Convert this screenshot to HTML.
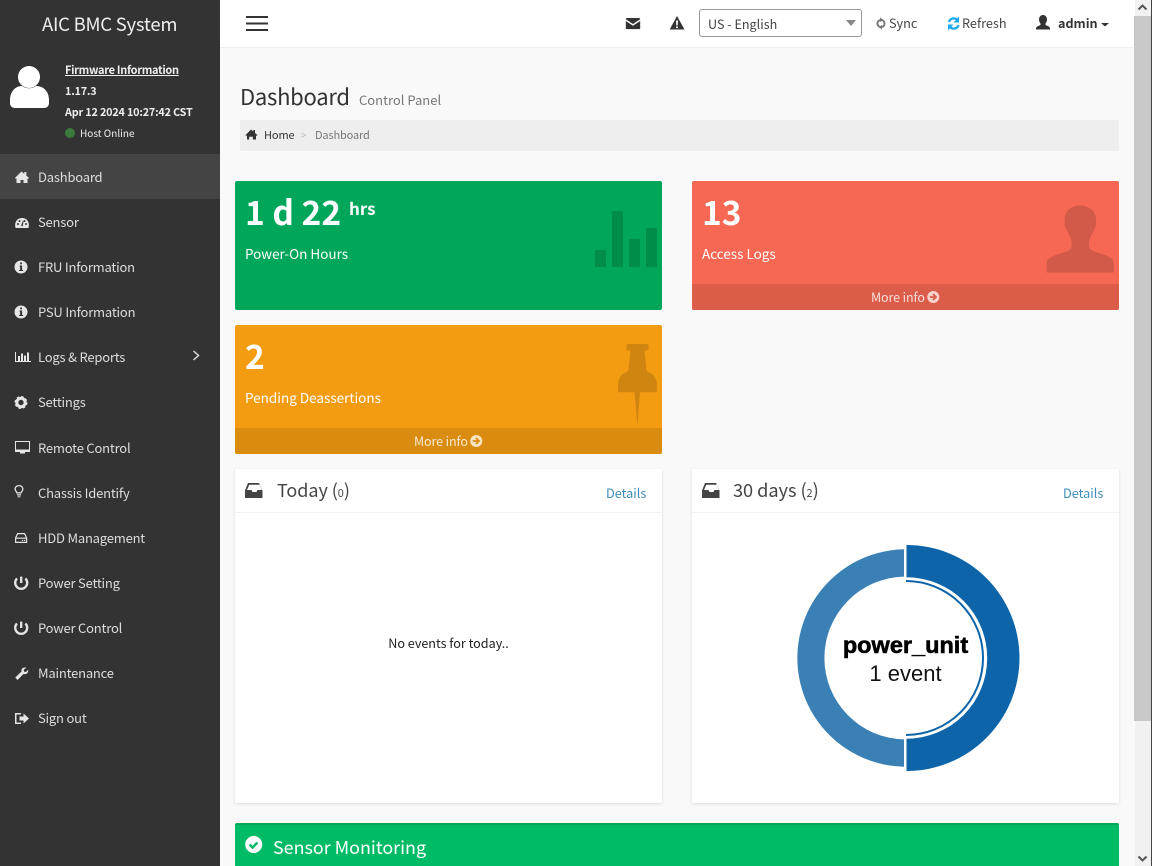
<!DOCTYPE html>
<html><head><meta charset="utf-8"><title>AIC BMC System</title>
<style>
html,body{margin:0;padding:0;width:1152px;height:866px;overflow:hidden;background:#f9f9f9}
body{position:relative;font-family:"Noto Sans CJK JP","Liberation Sans",sans-serif;color:#333}
.a,.t{position:absolute}
.t{white-space:nowrap;line-height:20px;height:20px}
svg{position:absolute;overflow:visible}
.nav{color:#ddd;font-size:13px;letter-spacing:-.2px;left:38px}
.w{color:#fff}
.card{position:absolute;border-radius:2px}
.panel{position:absolute;background:#fff;box-shadow:0 1px 3px rgba(0,0,0,.12)}
.more{color:rgba(255,255,255,.8);font-size:12.5px;letter-spacing:-.1px}
</style></head><body>

<div class="a" style="left:0;top:0;width:220px;height:866px;background:#333"></div>
<div class="a" style="left:0;top:154px;width:220px;height:45px;background:#444"></div>
<div class="t" style="left:42px;top:14px;font-size:18.5px;letter-spacing:-.25px;color:#eee">AIC BMC System</div>
<svg style="left:0;top:0" width="60" height="120"><circle cx="29" cy="77" r="11" fill="#fff"/><path d="M10 100c0-9 6-14 12-14 4 3 10 3 14 0 7 0 13 5 13 14v3c0 3-2 5-5 5H15c-3 0-5-2-5-5z" fill="#fff"/></svg>
<div class="t" style="left:65px;top:60px;font-size:11px;letter-spacing:-.3px;color:#eee;font-weight:700;text-decoration:underline">Firmware Information</div>
<div class="t" style="left:65px;top:81px;font-size:10.8px;letter-spacing:-.18px;color:#eee;font-weight:700">1.17.3</div>
<div class="t" style="left:65px;top:102px;font-size:10.8px;letter-spacing:-.18px;color:#eee;font-weight:700">Apr 12 2024 10:27:42 CST</div>
<div class="a" style="left:65px;top:128px;width:10px;height:10px;border-radius:50%;background:#3c7a3c"></div>
<div class="t" style="left:80px;top:123px;font-size:10px;color:#eee">Host Online</div>

<svg style="left:0;top:0" width="220" height="740" fill="#e6e6e6">
<path d="M21.500 171.500l2.800 2.400V172h2v3.600l2.700 2.300-.8 1-.7-.6v4.700h-4v-3h-3v3h-4v-4.700l-.7.6-.8-1z"/>
<path d="M15.600 228c-1.600-5 1-10 6.400-10s8 5 6.400 10z"/>
<g fill="#333"><circle cx="18" cy="224" r="1"/><circle cx="19.500" cy="221" r="1"/><circle cx="24.500" cy="221" r="1"/><circle cx="26" cy="224" r="1"/><path d="M21 226l1.800-5 .8.300-1 5z"/></g>
<circle cx="21" cy="267" r="6.500"/><circle cx="21" cy="312" r="6.500"/>
<path d="M15 352h1v9h15v1H15zM18 356h2v5h-2zM21 353.500h2v7.500h-2zM24 355.500h2v5.500h-2zM27 352.500h2v8.500h-2z"/>
<circle cx="21" cy="402.500" r="4.200" fill="none" stroke="#e6e6e6" stroke-width="3"/>
<circle cx="21" cy="402.500" r="5.700" fill="none" stroke="#e6e6e6" stroke-width="1.600" stroke-dasharray="2.400 2.080"/>
<path d="M15 441h15v11h-5v1.500h-5V452h-5zM16 442v8.500h13V442z" fill-rule="evenodd"/><rect x="15" y="449.500" width="15" height="2.500"/>
<path d="M19 485c2.500 0 4.500 1.800 4.500 4 0 1.800-1.500 2.800-1.800 4.500h-5.400c-.3-1.700-1.800-2.700-1.800-4.500 0-2.200 2-4 4.500-4zm0 1.300c-1.800 0-3.200 1.200-3.200 2.700 0 1.300 1.200 2.200 1.600 3.300h3.200c.4-1.100 1.600-2 1.600-3.300 0-1.500-1.400-2.700-3.200-2.700zM17 494.300h4v1.200h-4zM17.600 496.200h2.800v1h-2.800z" fill-rule="evenodd"/>
<path d="M17.600 533.600h7l2 4.400v4.400h-11V538zM15.600 538.200h10.800" fill="none" stroke="#e6e6e6" stroke-width="1.200"/><rect x="22" y="539.800" width="1.100" height="1.200"/><rect x="24" y="539.800" width="1.100" height="1.200"/>
<g fill="none" stroke="#e6e6e6" stroke-width="2.300"><path d="M17 578.500a6 6 0 1 0 8.400 0M21.200 576.600v6.400"/><path d="M17 623.500a6 6 0 1 0 8.400 0M21.200 621.600v6.400"/></g>
<path d="M15.300 677.500l6.200-6c-.5-2.300 1-4 3.500-4h1.500l-2.700 2.300.3 1.800 1.800.4 2.300-2.300c.4 2.900-1.500 5-4.700 4.300l-6 6z"/>
<path d="M15 713h6v1.500h-4.500v8H21v1.500h-6zM19.500 716.500h4v-3l5.500 5-5.500 5v-3h-4z"/>
</svg>
<svg style="left:0;top:0" width="220" height="300"><g fill="#333"><rect x="20.200" y="262.500" width="1.800" height="1.800"/><path d="M19.500 265.500h2.600v4.500h1v1h-4v-1h1v-3.500h-.6z"/><rect x="20.200" y="307.500" width="1.800" height="1.800"/><path d="M19.500 310.500h2.600v4.500h1v1h-4v-1h1v-3.500h-.6z"/></g><path d="M193.500 351l5 4.500-5 4.500" fill="none" stroke="#ddd" stroke-width="1.500"/></svg>
<div class="t nav" style="top:167px">Dashboard</div>
<div class="t nav" style="top:212px">Sensor</div>
<div class="t nav" style="top:257px">FRU Information</div>
<div class="t nav" style="top:302px">PSU Information</div>
<div class="t nav" style="top:347px">Logs &amp; Reports</div>
<div class="t nav" style="top:392px">Settings</div>
<div class="t nav" style="top:438px">Remote Control</div>
<div class="t nav" style="top:483px">Chassis Identify</div>
<div class="t nav" style="top:528px">HDD Management</div>
<div class="t nav" style="top:573px">Power Setting</div>
<div class="t nav" style="top:618px">Power Control</div>
<div class="t nav" style="top:663px">Maintenance</div>
<div class="t nav" style="top:708px">Sign out</div>

<div class="a" style="left:220px;top:0;width:915px;height:47px;background:#fff;border-bottom:1px solid #eee"></div>
<svg style="left:0;top:0" width="1135" height="48">
<g fill="#333"><rect x="246" y="16" width="22" height="2"/><rect x="246" y="22.500" width="22" height="2"/><rect x="246" y="29" width="22" height="2"/>
<path d="M627 18h12c.6 0 1.200.5 1.200 1.200L633 24 625.800 19.200c0-.7.500-1.200 1.200-1.200zM625.800 21l7.200 4.700 7.200-4.700v7.200c0 .5-.5.900-1.200.9h-12c-.7 0-1.200-.4-1.200-.9z"/>
<path d="M677 16l7.500 13.500h-14.800zm-1 4.500l.3 5h1.400l.3-5zm0 6v1.600h2v-1.600z" fill-rule="evenodd"/>
<path d="M1043 15c2.500 0 4 2 4 4.500 0 1.800-.7 3-1.500 4v1.500c2 1 4.500 1.400 4.500 3.500v1h-14v-1c0-2.100 2.500-2.500 4.500-3.500v-1.500c-.8-1-1.500-2.200-1.500-4 0-2.500 1.500-4.500 4-4.500z"/>
<path d="M1101 23h8l-4 3.500z"/></g>
<circle cx="881" cy="23.500" r="3.600" fill="none" stroke="#777" stroke-width="1.900"/><path d="M880 17.500l3.500 2.500-3.500 2zM882 29.500l-3.500-2.500 3.500-2z" fill="#777"/>
<path d="M949 22a5 5 0 0 1 8.500-2M958.500 25a5 5 0 0 1-8.500 2" fill="none" stroke="#1ca8ea" stroke-width="2.300"/><path d="M959 16.500v6h-5.500zM948 30.500v-6h5.500z" fill="#1ca8ea"/>
</svg>
<div class="a" style="left:699px;top:9px;width:161px;height:26px;background:#fff;border:1px solid #999;border-radius:3px"></div>
<svg style="left:846px;top:20px" width="12" height="8"><path d="M0 0h10L5 6z" fill="#888"/></svg>
<div class="t" style="left:708px;top:14px;font-size:12.6px;color:#444">US - English</div>
<div class="t" style="left:889px;top:13px;font-size:12.7px;color:#444">Sync</div>
<div class="t" style="left:962px;top:13px;font-size:12.7px;color:#444">Refresh</div>
<div class="t" style="left:1058px;top:13px;font-size:12.6px;color:#333;font-weight:700">admin</div>

<div class="t" style="left:240px;top:81px;height:30px;line-height:30px;font-size:22px;letter-spacing:-.25px;color:#333">Dashboard</div>
<div class="t" style="left:359px;top:90px;font-size:13px;color:#777">Control Panel</div>
<div class="a" style="left:240px;top:120px;width:879px;height:31px;background:#eee;border-radius:2px"></div>
<svg style="left:0;top:0" width="260" height="145"><path d="M251 129.500l2.300 2V130h1.700v3l2.500 2.100-.7.900-.8-.7v4.200h-3.200v-2.700h-3.600v2.700H247v-4.200l-.8.700-.7-.9z" fill="#333"/></svg>
<div class="t" style="left:264px;top:125px;font-size:11px;letter-spacing:-.1px;color:#333">Home</div>
<div class="t" style="left:301px;top:125px;font-size:10px;color:#bbb">&gt;</div>
<div class="t" style="left:315px;top:125px;font-size:11px;letter-spacing:-.15px;color:#777">Dashboard</div>

<div class="card" style="left:235px;top:181px;width:427px;height:129px;background:#00a65a"></div>
<svg style="left:0;top:0" width="700" height="300"><g fill="#008d4c"><rect x="595" y="250" width="11" height="17"/><rect x="612" y="211" width="11" height="56"/><rect x="629" y="239" width="11" height="28"/><rect x="646" y="228" width="11" height="39"/></g></svg>
<div class="t w" style="left:245px;top:191px;height:40px;line-height:40px;font-size:33.5px;font-weight:700">1 d 22</div>
<div class="t w" style="left:349px;top:198px;font-size:17px;font-weight:700">hrs</div>
<div class="t w" style="left:245px;top:243px;font-size:13.5px">Power-On Hours</div>

<div class="card" style="left:692px;top:181px;width:427px;height:129px;background:#f66854;overflow:hidden"><div class="a" style="left:0;top:103px;width:427px;height:26px;background:#dc5c4a"></div></div>
<svg style="left:0;top:0" width="1135" height="300"><path d="M1080 205.500c9 0 16 6 16 14 0 3 .5 5-.5 7-1 3-2 5-3.500 7.500-1.500 3-3 6-3 9 0 5 1 6.500 4 8 5 2 21 5.500 21 11.500v10h-67.300v-10c0-6 16-9.500 21-11.500 3-1.500 4-3 4-8 0-3-1.500-6-3-9-1.500-2.500-2.500-4.500-3.500-7.500-1-2-.5-4-.5-7 0-8 6-14 15.300-14z" fill="#d25a49"/></svg>
<div class="t w" style="left:702px;top:191px;height:40px;line-height:40px;font-size:33.5px;font-weight:700">13</div>
<div class="t w" style="left:702px;top:243px;font-size:13.5px">Access Logs</div>
<div class="t more" style="left:871px;top:287px">More info</div>
<svg style="left:927px;top:291px" width="13" height="13"><circle cx="6.300" cy="6" r="6" fill="#f8d2cc"/><path d="M2.800 6h6M6 3l3 3-3 3" fill="none" stroke="#dc5c4a" stroke-width="1.800"/></svg>

<div class="card" style="left:235px;top:325px;width:427px;height:129px;background:#f39c12;overflow:hidden"><div class="a" style="left:0;top:103px;width:427px;height:26px;background:#da8c10"></div></div>
<svg style="left:0;top:0" width="700" height="440"><path d="M627 344h20c1 0 1.500 .7 1.500 1.500v3.500c0 1-.7 1.500-1.500 1.500h-2.500l2 19c.2 1.500 1 2 3 3.200 4 2 7.500 5 7.500 13v5c0 1-.5 1.500-1.500 1.500H640l-2.300 31-.5 0-2.700-31h-15c-1 0-1.500-.5-1.500-1.500v-5c0-8 3.500-11 7.500-13 2-1.200 2.800-1.700 3-3.200l2-19h-2.500c-.8 0-1.500-.5-1.500-1.500v-3.500c0-.8 .5-1.500 1.500-1.500z" fill="#d08510"/></svg>
<div class="t w" style="left:245px;top:335px;height:40px;line-height:40px;font-size:33.5px;font-weight:700">2</div>
<div class="t w" style="left:245px;top:387px;font-size:13.5px">Pending Deassertions</div>
<div class="t more" style="left:414px;top:431px">More info</div>
<svg style="left:470px;top:435px" width="13" height="13"><circle cx="6.300" cy="6" r="6" fill="#fae3c0"/><path d="M2.800 6h6M6 3l3 3-3 3" fill="none" stroke="#da8c10" stroke-width="1.800"/></svg>

<div class="panel" style="left:235px;top:469px;width:427px;height:334px"><div class="a" style="left:0;top:43px;width:427px;height:1px;background:#f2f2f2"></div></div>
<div class="panel" style="left:692px;top:469px;width:427px;height:334px"><div class="a" style="left:0;top:43px;width:427px;height:1px;background:#f2f2f2"></div></div>
<svg style="left:0;top:0" width="760" height="520"><g fill="#444"><path d="M248 483h11l3.500 7.500v7.500h-17.500v-7.500zM249.300 484.800l-2.300 5.200h4.500l1 2h4l1-2h4.500l-2.300-5.200z" fill-rule="evenodd"/><path d="M705 483h11l3.500 7.500v7.500h-17.500v-7.500zM706.300 484.800l-2.300 5.200h4.500l1 2h4l1-2h4.500l-2.300-5.200z" fill-rule="evenodd"/></g></svg>
<div class="t" style="left:277px;top:478px;height:24px;line-height:24px;font-size:18px;letter-spacing:-.05px;color:#444">Today (<span style="font-size:11px">0</span>)</div>
<div class="t" style="left:606px;top:483px;font-size:12.7px;color:#3c8dbc">Details</div>
<div class="t" style="left:733px;top:478px;height:24px;line-height:24px;font-size:18.2px;letter-spacing:-.05px;color:#444">30 days (<span style="font-size:11px">2</span>)</div>
<div class="t" style="left:1063px;top:483px;font-size:12.7px;color:#3c8dbc">Details</div>
<div class="t" style="left:235px;top:633px;width:427px;text-align:center;font-size:12.6px;color:#222">No events for today..</div>

<svg style="left:0;top:0" width="1135" height="800">
<path d="M904 549.300A108.720 108.720 0 0 0 904 766.700V739.400A81.420 81.420 0 0 1 904 576.600Z" fill="#3a80b5"/>
<path d="M906.500 545A113 113 0 0 1 906.500 771V738.700A80.700 80.700 0 0 0 906.500 577.300Z" fill="#0d64a8"/>
<path d="M906 581A77 77 0 0 1 906 735" fill="none" stroke="#0d64a8" stroke-width="2"/>
<text x="905.500" y="653" text-anchor="middle" font-family="'Liberation Sans',sans-serif" font-weight="700" font-size="23.500" fill="#000" stroke="#000" stroke-width=".6">power_unit</text>
<text x="905.500" y="681" text-anchor="middle" font-family="'Liberation Sans',sans-serif" font-size="22" fill="#111">1 event</text>
</svg>

<div class="a" style="left:235px;top:823px;width:884px;height:43px;background:#00bb66;border-top:2px solid #00a65a;box-sizing:border-box;border-radius:2px 2px 0 0"></div>
<svg style="left:245px;top:836px" width="18" height="18"><circle cx="8.700" cy="8.500" r="8.500" fill="#fff"/><path d="M4.500 8.500l3 3 5-5" fill="none" stroke="#00bb66" stroke-width="2.400"/></svg>
<div class="t w" style="left:273px;top:834px;height:26px;line-height:26px;font-size:17.9px">Sensor Monitoring</div>

<div class="a" style="left:1135px;top:0;width:17px;height:866px;background:#f1f1f1"></div>
<div class="a" style="left:1134px;top:16px;width:17px;height:705px;background:#c8c8c8"></div>
<div class="a" style="left:1151px;top:0;width:1px;height:866px;background:#444"></div>
<svg style="left:1134px;top:0" width="17" height="866"><path d="M4.500 9.500L8.500 5.500 12.500 9.500M4.500 856.500L8.500 860.500 12.500 856.500" fill="none" stroke="#555" stroke-width="2"/></svg>
</body></html>
